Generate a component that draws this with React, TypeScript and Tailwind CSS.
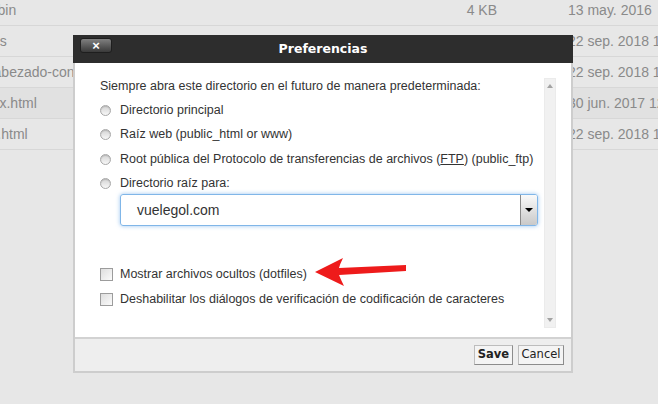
import React from "react";

const rows = [
  { name: "cgi-bin", shift: "-ml-[25px]", size: "4 KB", date: "13 may. 2016" },
  { name: "logs", shift: "-ml-[19px]", size: "", date: "22 sep. 2018 12:00" },
  { name: "encabezado-contacto.html", shift: "-ml-[29px]", size: "", date: "22 sep. 2018 12:00" },
  { name: "index.html", shift: "-ml-[27px]", size: "", date: "30 jun. 2017 12:00", hover: true },
  { name: "404.html", shift: "-ml-[26px]", size: "", date: "22 sep. 2018 12:00" },
];

const radios = [
  "Directorio principal",
  "Raíz web (public_html or www)",
  "Root pública del Protocolo de transferencias de archivos (FTP) (public_ftp)",
  "Directorio raíz para:",
];

const Radio = () => (
  <span className="inline-block w-[11px] h-[11px] rounded-full border border-[#a8a8a8] bg-gradient-to-b from-[#d4d4d4] to-[#f7f7f7] shadow-[inset_0_1px_1px_rgba(0,0,0,0.15)]" />
);

const Checkbox = () => (
  <span className="inline-block w-[13px] h-[13px] border border-[#9c9c9c] bg-gradient-to-br from-[#dedede] to-[#fbfbfb]" />
);

const App = () => {
  return (
    <div
      className="relative w-[658px] h-[404px] overflow-hidden bg-[#e7e7e7] text-[#8a8a8a]"
      style={{ fontFamily: '"Liberation Sans", Arial, sans-serif' }}
    >
      <div className="-mt-[5px]">
        {rows.map((row) => (
          <div
            key={row.name}
            className={`flex items-center h-[31px] border-b border-[#d7d7d7] text-[14px] ${row.hover ? "bg-[#e1e1e1]" : ""}`}
          >
            <div className="w-[400px] shrink-0 overflow-hidden whitespace-nowrap">
              <span className={`inline-block ${row.shift}`}>{row.name}</span>
            </div>
            <div className="w-[97px] shrink-0 text-right">{row.size}</div>
            <div className="ml-[71px] shrink-0 whitespace-nowrap">{row.date}</div>
          </div>
        ))}
      </div>

      <div className="absolute left-[73px] top-[35px] w-[500px] flex flex-col">
        <div className="relative h-[28px] bg-[#2d2d2d] flex items-center justify-center">
          <button className="absolute left-[7px] top-[3px] w-[32px] h-[15px] rounded-[3px] bg-gradient-to-b from-[#808080] to-[#3a3a3a] border border-[#1e1e1e] flex items-center justify-center text-white text-[13px] font-bold leading-none">
            ×
          </button>
          <span
            className="text-white text-[12.5px] font-bold"
            style={{ fontFamily: '"DejaVu Sans", Verdana, sans-serif' }}
          >
            Preferencias
          </span>
        </div>

        <div className="border-x-2 border-b-2 border-[#cdcdcd]">
          <div className="h-[274px] bg-white flex text-[#333333] text-[12.5px]">
            <div className="flex-1 pl-[25px] pt-[11px]">
              <div className="h-[24px] flex items-center">
                Siempre abra este directorio en el futuro de manera predeterminada:
              </div>
              {radios.map((label) => (
                <div key={label} className="h-[24.5px] flex items-center gap-[9px]">
                  <Radio />
                  <span>
                    {label.includes("(FTP)") ? (
                      <>
                        Root pública del Protocolo de transferencias de archivos (<span className="underline">FTP</span>) (public_ftp)
                      </>
                    ) : (
                      label
                    )}
                  </span>
                </div>
              ))}
              <div className="ml-[20px] mr-[3px] -mt-[2px] h-[32px] flex border border-[#80b6e8] rounded-[3px] shadow-[0_0_4px_rgba(90,160,230,0.6)] overflow-hidden">
                <div className="flex-1 flex items-center pl-[16px] text-[14px] text-[#333333]">
                  vuelegol.com
                </div>
                <div className="w-[17px] border-l border-[#8a8a8a] bg-gradient-to-b from-[#fafafa] to-[#c9c9c9] flex items-center justify-center">
                  <span className="w-0 h-0 border-l-[4px] border-r-[4px] border-t-[4px] border-l-transparent border-r-transparent border-t-black" />
                </div>
              </div>
              <div className="mt-[36px] h-[25px] flex items-center gap-[7px]">
                <Checkbox />
                <span>Mostrar archivos ocultos (dotfiles)</span>
              </div>
              <div className="h-[25px] flex items-center gap-[7px]">
                <Checkbox />
                <span>Deshabilitar los diálogos de verificación de codificación de caracteres</span>
              </div>
            </div>
            <div className="mt-[15px] mr-[15px] ml-[3px] w-[12px] h-[250px] bg-[#f1f1f1] border border-[#ebebeb] flex flex-col items-center justify-between py-[5px]">
              <span className="w-0 h-0 border-l-[3.5px] border-r-[3.5px] border-b-[4px] border-l-transparent border-r-transparent border-b-[#a3a3a3]" />
              <span className="w-0 h-0 border-l-[3.5px] border-r-[3.5px] border-t-[4px] border-l-transparent border-r-transparent border-t-[#a3a3a3]" />
            </div>
          </div>
          <div
            className="h-[34px] bg-[#eeeeee] border-t-2 border-[#d2d2d2] flex items-center justify-end gap-[5px] pr-[7px] text-[11.5px] text-[#222222]"
            style={{ fontFamily: '"DejaVu Sans", Verdana, sans-serif' }}
          >
            <button className="w-[39px] h-[20px] bg-[#f4f4f4] border border-[#bdbdbd] border-r-[#8c8c8c] border-b-[#8c8c8c] font-bold">
              Save
            </button>
            <button className="w-[46px] h-[20px] bg-[#f4f4f4] border border-[#bdbdbd] border-r-[#8c8c8c] border-b-[#8c8c8c]">
              Cancel
            </button>
          </div>
        </div>
      </div>

      <svg className="absolute left-[310px] top-[255px]" width="100" height="35" viewBox="0 0 100 35">
        <path d="M5 17 L33 3 Q30 9 29 13 L96 10 L96 16 L29 20 Q31 25 34 31 Z" fill="#ee1b1b" />
      </svg>
    </div>
  );
};

export default App;
